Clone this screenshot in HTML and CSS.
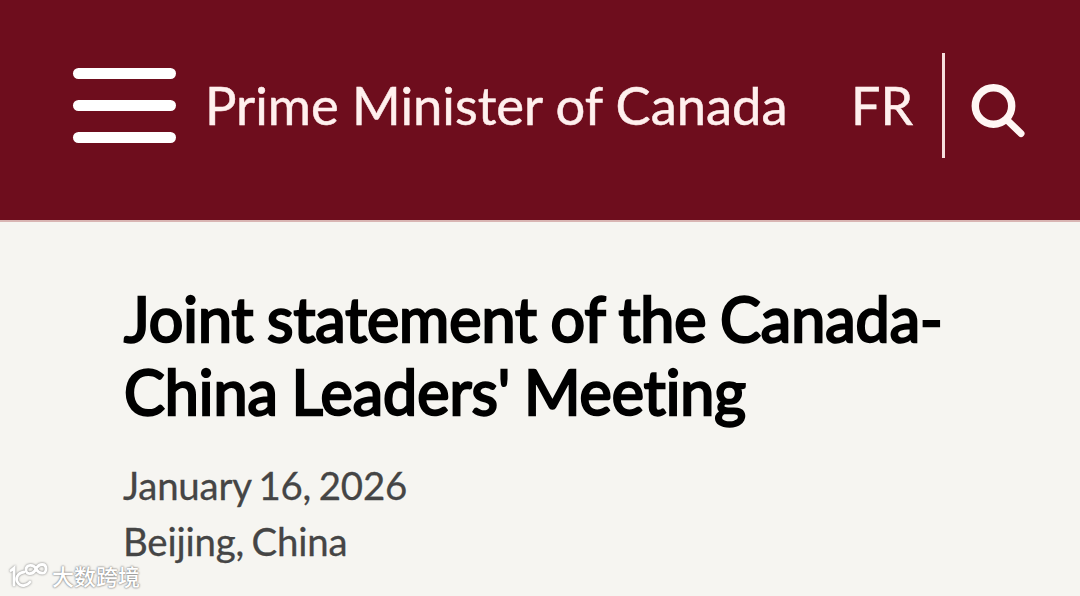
FILE: index.html
```html
<!DOCTYPE html>
<html lang="en">
<head>
    <meta charset="UTF-8">
    <meta name="viewport" content="width=device-width, initial-scale=1.0">
    <title>Joint statement of the Canada-China Leaders' Meeting</title>
    <link rel="stylesheet" href="styles.css">
</head>
<body>
    <!-- Site Header -->
    <header class="site-header">
        <button class="menu-btn" aria-label="Menu">
            <span></span>
            <span></span>
            <span></span>
        </button>
        <a class="site-name" href="#">Prime Minister of Canada</a>
        <a class="lang-link" href="#">FR</a>
        <button class="search-btn" aria-label="Search">
            <svg viewBox="0 0 54 54" width="54" height="54">
                <circle cx="22.5" cy="22" r="18.2" fill="none" stroke="#fff6f4" stroke-width="7.4"/>
                <path d="M36 36 L50 49.5" stroke="#fff6f4" stroke-width="7" stroke-linecap="round"/>
            </svg>
        </button>
    </header>

    <!-- Article -->
    <main class="article">
        <h1 class="article-title">Joint statement of the Canada-<br>China Leaders' Meeting</h1>
        <p class="article-meta">January 16, 2026</p>
        <p class="article-meta">Beijing, China</p>
    </main>

    <!-- Watermark -->
    <div class="watermark">
        <svg viewBox="0 0 40 28" width="40" height="28" fill="none" stroke-linecap="round">
            <path d="M3 9.5 L6 7 V24"/>
            <path d="M16 11 C9 12 7 18 10 22 C13 26 19 25 22 21"/>
            <path d="M28 8 C26 3 18 3 18 9 C18 14 25 14 28 8 C31 2 38 2 38 8 C38 14 31 13 28 8"/>
        </svg>
        <span>大数跨境</span>
    </div>
</body>
</html>
```
FILE: styles.css
```css
* {
    margin: 0;
    padding: 0;
    box-sizing: border-box;
}

body {
    font-family: Lato, sans-serif;
    font-variant-ligatures: none;
    background: #f6f5f1;
    color: #000000;
    height: 596px;
    overflow: hidden;
}

/* Header */
.site-header {
    display: flex;
    align-items: center;
    height: 222px;
    padding: 0 55px 10px 73px;
    background: #6e0d1d;
    border-bottom: 2px solid #d9b5b3;
    color: #fff0ee;
}

.site-header a {
    color: #fff0ee;
    text-decoration: none;
    font-size: 52.5px;
    line-height: 60px;
    white-space: nowrap;
    -webkit-text-stroke: 0.5px #fff0ee;
}

.menu-btn,
.search-btn {
    background: none;
    border: none;
}

.menu-btn {
    display: flex;
    flex-direction: column;
    gap: 21px;
    width: 103px;
    margin-right: 29px;
}

.menu-btn span {
    height: 11px;
    border-radius: 6px;
    background: #ffffff;
}

.site-header .lang-link {
    margin-left: auto;
    font-size: 52px;
}

.search-btn {
    display: flex;
    align-items: center;
    height: 105px;
    margin-left: 29px;
    padding: 11px 0 0 26px;
    border-left: 3px solid #f7dedd;
}

/* Article */
.article {
    padding: 60px 123px 0;
}

.article-title {
    font-size: 61px;
    line-height: 73px;
    font-weight: 400;
    -webkit-text-stroke: 2.4px #000000;
    word-spacing: -2px;
    margin-bottom: 29px;
    padding-left: 1px;
    white-space: nowrap;
}

.article-meta {
    font-size: 38.4px;
    line-height: 56px;
    letter-spacing: -0.2px;
    word-spacing: -2px;
    -webkit-text-stroke: 0.3px #454545;
    color: #454545;
}

/* Watermark */
.watermark {
    position: absolute;
    left: 8px;
    bottom: 7px;
    display: flex;
    align-items: center;
    gap: 4px;
    font-family: "Noto Sans CJK SC", sans-serif;
    font-size: 22px;
    font-weight: 500;
    line-height: 28px;
    color: #ffffff;
    text-shadow: 0 0 2px #777777, 0 0 2px #999999;
}

.watermark svg {
    stroke: #ffffff;
    stroke-width: 2.8;
    filter: drop-shadow(0 0 1px #777777);
}
```
